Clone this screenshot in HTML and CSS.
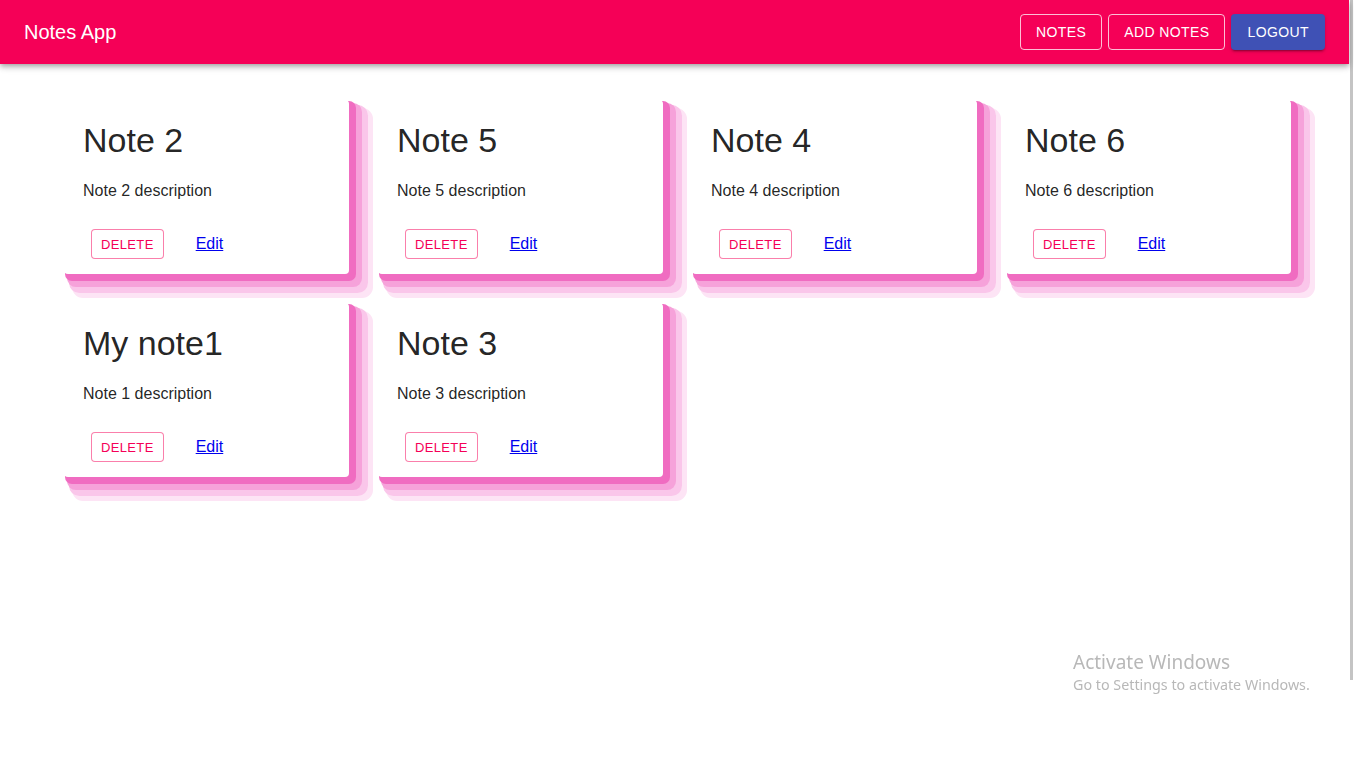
FILE: index.html
```html
<!DOCTYPE html>
<html lang="en">
<head>
<meta charset="utf-8">
<title>Notes App</title>
<link rel="stylesheet" href="styles.css">
</head>
<body>
<div class="shell">
  <div class="main">
    <header class="navbar">
      <div class="brand">Notes App</div>
      <nav class="nav-actions">
        <button class="btn-outline">Notes</button>
        <button class="btn-outline">Add Notes</button>
        <button class="btn-contained">Logout</button>
      </nav>
    </header>
    <main class="grid">
      <div class="card">
        <h2 class="card-title">Note 2</h2>
        <p class="card-desc">Note 2 description</p>
        <div class="card-actions"><button class="btn-delete">Delete</button><a class="edit" href="#">Edit</a></div>
      </div>
      <div class="card">
        <h2 class="card-title">Note 5</h2>
        <p class="card-desc">Note 5 description</p>
        <div class="card-actions"><button class="btn-delete">Delete</button><a class="edit" href="#">Edit</a></div>
      </div>
      <div class="card">
        <h2 class="card-title">Note 4</h2>
        <p class="card-desc">Note 4 description</p>
        <div class="card-actions"><button class="btn-delete">Delete</button><a class="edit" href="#">Edit</a></div>
      </div>
      <div class="card">
        <h2 class="card-title">Note 6</h2>
        <p class="card-desc">Note 6 description</p>
        <div class="card-actions"><button class="btn-delete">Delete</button><a class="edit" href="#">Edit</a></div>
      </div>
      <div class="card">
        <h2 class="card-title">My note1</h2>
        <p class="card-desc">Note 1 description</p>
        <div class="card-actions"><button class="btn-delete">Delete</button><a class="edit" href="#">Edit</a></div>
      </div>
      <div class="card">
        <h2 class="card-title">Note 3</h2>
        <p class="card-desc">Note 3 description</p>
        <div class="card-actions"><button class="btn-delete">Delete</button><a class="edit" href="#">Edit</a></div>
      </div>
    </main>
  </div>
  <div class="scrollbar"><div class="thumb"></div></div>
</div>
<div class="watermark">
  <div class="wm-title">Activate Windows</div>
  <div class="wm-sub">Go to Settings to activate Windows.</div>
</div>
</body>
</html>
```
FILE: styles.css
```css
html, body {
  margin: 0;
  padding: 0;
  background: #ffffff;
  font-family: "Liberation Sans", Arial, Helvetica, sans-serif;
}

.shell {
  display: flex;
  min-height: 768px;
}

.main {
  flex: 1;
  min-width: 0;
}

.scrollbar {
  width: 5px;
  background: #ffffff;
  display: flex;
  justify-content: center;
}

.thumb {
  width: 3px;
  height: 680px;
  background: #c4c4c4;
}

.navbar {
  height: 64px;
  background: #f50057;
  display: flex;
  align-items: center;
  justify-content: space-between;
  padding: 0 24px;
  box-shadow: 0 2px 4px -1px rgba(0,0,0,0.2), 0 4px 5px 0 rgba(0,0,0,0.14), 0 1px 10px 0 rgba(0,0,0,0.12);
  position: relative;
  z-index: 2;
}

.brand {
  color: #ffffff;
  font-size: 20px;
  font-weight: 500;
  line-height: 1.6;
}

.nav-actions {
  display: flex;
  gap: 6px;
}

.btn-outline,
.btn-contained {
  font-family: "Liberation Sans", Arial, sans-serif;
  font-size: 14px;
  font-weight: 500;
  letter-spacing: 0.4px;
  text-transform: uppercase;
  height: 36px;
  border-radius: 4px;
  color: #ffffff;
  cursor: pointer;
  line-height: 1.75;
}

.btn-outline {
  background: transparent;
  border: 1px solid rgba(255,255,255,0.75);
  padding: 0 15px;
}

.btn-contained {
  background: #3f51b5;
  border: none;
  padding: 0 16px;
  box-shadow: 0 3px 1px -2px rgba(0,0,0,0.2), 0 2px 2px 0 rgba(0,0,0,0.14), 0 1px 5px 0 rgba(0,0,0,0.12);
}

.grid {
  display: grid;
  grid-template-columns: repeat(4, 285px);
  column-gap: 29px;
  row-gap: 29px;
  padding: 36px 0 0 64px;
}

.card {
  background: #ffffff;
  border-radius: 4px;
  height: 174px;
  box-sizing: border-box;
  padding: 19px 16px 0 19px;
  box-shadow:
    4px 4px 0 3px #f06cc1,
    8px 8px 0 5px #f6a2da,
    12px 12px 0 7px #fac6ea,
    16px 16px 0 8px #fde4f5;
}

.card-title {
  margin: 0 0 18px 0;
  font-size: 34px;
  font-weight: 400;
  line-height: 42px;
  color: rgba(0,0,0,0.87);
}

.card-desc {
  margin: 0;
  font-size: 16px;
  line-height: 24px;
  color: rgba(0,0,0,0.87);
}

.card-actions {
  display: flex;
  align-items: center;
  margin-top: 26px;
  padding-left: 8px;
}

.btn-delete {
  font-family: "Liberation Sans", Arial, sans-serif;
  font-size: 13px;
  font-weight: 400;
  letter-spacing: 0.35px;
  text-transform: uppercase;
  color: #f50057;
  background: #ffffff;
  border: 1px solid rgba(245,0,87,0.5);
  border-radius: 4px;
  height: 30px;
  padding: 0 9px;
  cursor: pointer;
}

.edit {
  margin-left: 32px;
  font-size: 16px;
  color: #0000ee;
  text-decoration: underline;
}

.watermark {
  position: fixed;
  left: 1073px;
  top: 650px;
  font-family: "Noto Sans", "Open Sans", sans-serif;
  color: #b8b8b8;
}

.wm-title {
  font-size: 19px;
  line-height: 24px;
}

.wm-sub {
  font-size: 14.3px;
  line-height: 22px;
}
```
